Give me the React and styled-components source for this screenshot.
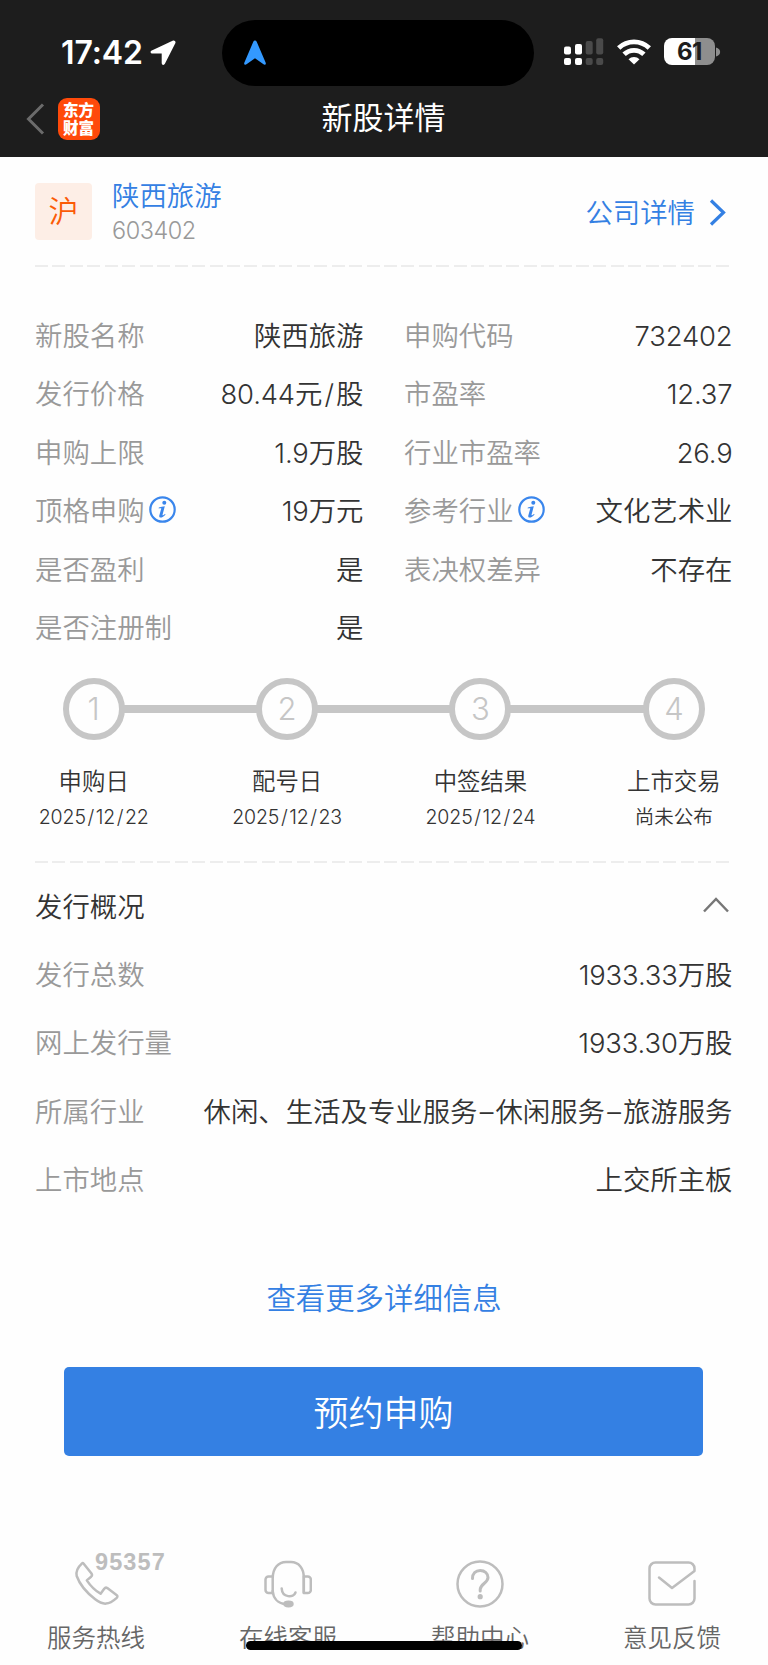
import React from 'react';
import styled, { createGlobalStyle } from 'styled-components';

const App = () => (
  <>
    <GlobalStyle />
    <Screen>
      <Header>
        <StatusBar>
          <Clock>
            <Time>17:42</Time>
            <LocationIcon />
          </Clock>
          <Island>
            <NavArrowIcon />
          </Island>
          <StatusIcons>
            <SignalIcon />
            <WifiIcon />
            <BatteryIcon />
          </StatusIcons>
        </StatusBar>
        <TitleBar>
          <BackGroup>
            <BackIcon />
            <BrandLogo>东方财富</BrandLogo>
          </BackGroup>
          <Title>新股详情</Title>
        </TitleBar>
      </Header>
      <Content>
        <StockHeader>
          <MarketTag>沪</MarketTag>
          <StockInfo>
            <StockName>陕西旅游</StockName>
            <StockCode>603402</StockCode>
          </StockInfo>
          <CompanyLink>
            公司详情
            <svg width="18" height="30" viewBox="0 0 18 30">
              <path d="M3 4.500 15.500 16.500 3 28.500" fill="none" stroke="#3480e3" strokeWidth="3.200" />
            </svg>
          </CompanyLink>
        </StockHeader>
        <Divider />
        <InfoGrid>
          {infoRows.map((item) => (
            <InfoCell key={item.label}>
              <Label>
                {item.label}
                {item.tip && <InfoIcon />}
              </Label>
              <Value text={item.value} />
            </InfoCell>
          ))}
        </InfoGrid>
        <Steps>
          {steps.map((step, i) => (
            <Step key={step.name}>
              <StepTrack>
                <StepLine $hidden={i === 0} />
                <StepCircle>{i + 1}</StepCircle>
                <StepLine $hidden={i === steps.length - 1} />
              </StepTrack>
              <StepName>{step.name}</StepName>
              <StepDate>
                <Mixed text={step.date} />
              </StepDate>
            </Step>
          ))}
        </Steps>
        <Divider />
        <SectionTitle>
          发行概况
          <svg width="28" height="18" viewBox="0 0 28 18">
            <path d="M2 15.500 14 3l12 12.500" fill="none" stroke="#777" strokeWidth="2.500" />
          </svg>
        </SectionTitle>
        {overview.map((item) => (
          <OverviewRow key={item.label}>
            <Label>{item.label}</Label>
            <Value text={item.value} />
          </OverviewRow>
        ))}
        <MoreLink>查看更多详细信息</MoreLink>
        <SubscribeButton>预约申购</SubscribeButton>
      </Content>
      <Footer>
        <FooterItem>
          <PhoneIcon />
          <HotlineNumber>95357</HotlineNumber>
          <span>服务热线</span>
        </FooterItem>
        <FooterItem>
          <HeadsetIcon />
          <span>在线客服</span>
        </FooterItem>
        <FooterItem>
          <HelpIcon />
          <span>帮助中心</span>
        </FooterItem>
        <FooterItem>
          <MailIcon />
          <span>意见反馈</span>
        </FooterItem>
      </Footer>
      <HomeIndicator />
    </Screen>
  </>
);

const infoRows = [
  { label: '新股名称', value: '陕西旅游' },
  { label: '申购代码', value: '732402' },
  { label: '发行价格', value: '80.44元/股' },
  { label: '市盈率', value: '12.37' },
  { label: '申购上限', value: '1.9万股' },
  { label: '行业市盈率', value: '26.9' },
  { label: '顶格申购', value: '19万元', tip: true },
  { label: '参考行业', value: '文化艺术业', tip: true },
  { label: '是否盈利', value: '是' },
  { label: '表决权差异', value: '不存在' },
  { label: '是否注册制', value: '是' },
];

const steps = [
  { name: '申购日', date: '2025/12/22' },
  { name: '配号日', date: '2025/12/23' },
  { name: '中签结果', date: '2025/12/24' },
  { name: '上市交易', date: '尚未公布' },
];

const overview = [
  { label: '发行总数', value: '1933.33万股' },
  { label: '网上发行量', value: '1933.30万股' },
  { label: '所属行业', value: '休闲、生活及专业服务–休闲服务–旅游服务' },
  { label: '上市地点', value: '上交所主板' },
];

// digits and separators use the latin face, everything else the CJK one
const Mixed = ({ text }) =>
  text
    .split(/([\d.]+|[/–])/)
    .filter(Boolean)
    .map((part, i) => {
      if (/^[/–]/.test(part)) return <Separator key={i}>{part}</Separator>;
      return /^\d/.test(part) ? <Num key={i}>{part}</Num> : part;
    });

const Value = ({ text }) => (
  <ValueText>
    <Mixed text={text} />
  </ValueText>
);

const LocationIcon = () => (
  <svg width="26" height="26" viewBox="0 0 26 26">
    <path
      d="M22.600 .8 1.800 10.400c-2 .9-1.500 3.200.6 3.200h9.300v9.400c0 2.200 2.400 2.500 3.200.8L25.300 3.300c.8-1.800-.9-3.300-2.700-2.500Z"
      fill="#fff"
    />
  </svg>
);

const NavArrowIcon = () => (
  <svg width="24" height="26" viewBox="0 0 24 26">
    <path
      d="M10.300 1.700c.6-1.500 2.800-1.500 3.400 0l9 21c.6 1.600-.9 2.500-2.200 1.600L12 18.200l-8.500 6.100c-1.300.9-2.800 0-2.200-1.600Z"
      fill="#3399ff"
    />
  </svg>
);

const SignalIcon = () => (
  <svg width="40" height="28" viewBox="0 0 40 28">
    <g fill="#fff">
      <rect x="0" y="8.500" width="7" height="8" rx="2" />
      <rect x="11" y="6" width="7" height="10.500" rx="2" />
      <rect x="0" y="20" width="7" height="7" rx="2" />
      <rect x="11" y="20" width="7" height="7" rx="2" />
    </g>
    <g fill="#4a4a4a">
      <rect x="21.700" y="3" width="7" height="13.500" rx="2" />
      <rect x="32.200" y="0.200" width="7" height="16.300" rx="2" />
      <rect x="21.700" y="20" width="7" height="7" rx="2" />
      <rect x="32.200" y="20" width="7" height="7" rx="2" />
    </g>
  </svg>
);

const WifiIcon = () => (
  <svg width="34" height="26" viewBox="0 0 34 26">
    <g fill="none" stroke="#fff" strokeWidth="4.800">
      <path d="M1.700 9a22 22 0 0 1 30.600 0" />
      <path d="M7.100 15.300a14.200 14.200 0 0 1 19.800 0" />
    </g>
    <path d="M17 25.500 11.500 20.200a7.900 7.900 0 0 1 11 0Z" fill="#fff" />
  </svg>
);

const BatteryIcon = () => (
  <Battery>
    <BatteryBody>61</BatteryBody>
    <svg width="5" height="10" viewBox="0 0 5 10">
      <path d="M0 0.500c5.500 1 5.500 8 0 9Z" fill="#8e8e8e" />
    </svg>
  </Battery>
);

const BackIcon = () => (
  <svg width="20" height="34" viewBox="0 0 20 34">
    <path d="M18 2.500 3.500 17 18 31.500" fill="none" stroke="#6b6b6b" strokeWidth="3" />
  </svg>
);

const InfoIcon = () => (
  <InfoSvg width="27" height="27" viewBox="0 0 27 27">
    <circle cx="13.500" cy="13.500" r="12.200" fill="none" stroke="#3a86ec" strokeWidth="2.200" />
    <circle cx="15.300" cy="6.800" r="2" fill="#3a86ec" />
    <path
      d="M9.800 11.600c2-.5 3.800-1 6-1.300l-2.200 8.200c-.3 1.300.6 1 2.400-.6l.6.500c-2.700 3.500-7 4.400-6.300 1.200l1.900-6.800c.2-.7-.4-.6-2.500-.4Z"
      fill="#3a86ec"
    />
  </InfoSvg>
);

const PhoneIcon = () => (
  <FooterSvg width="46" height="46" viewBox="0 0 46 46">
    <path d="M10.500 3.500 18.500 13.500c.8 1.100.6 2.200-.4 3.200l-4.300 3.700c4 6 8.300 10.300 13.800 13.300l3.600-5c1-1.200 1.900-1.400 3.100-.6L43.500 35c1.200.9 1.200 1.800.2 2.800-8 7.300-13.500 7.700-21.500 1.500C13.500 32.500 6.500 24 3.700 16 2.700 11.500 4 8 8.800 3.600c.7-.6 1.200-.7 1.700-.1Z" />
  </FooterSvg>
);

const HeadsetIcon = () => (
  <FooterSvg width="48" height="48" viewBox="0 0 48 48">
    <path d="M8.700 33V18.500C8.700 8 14.500 2 22 2h5c7.500 0 12.800 6 12.800 15.500v15" />
    <path d="M8.700 16.500H4.500a3 3 0 0 0-3 3V30a3 3 0 0 0 3 3h4.200M39.800 16.500h4a3 3 0 0 1 3 3V30a3 3 0 0 1-3 3h-4Z" />
    <path d="M8.700 31c.5 7.500 5.500 12.500 13.300 13.200" />
    <path d="M17.700 28.500c.5 9.500 12 9.500 13.800 4" />
    <ellipse cx="24.500" cy="44" rx="4" ry="2.200" fill="#bdbdbd" />
  </FooterSvg>
);

const HelpIcon = () => (
  <FooterSvg width="48" height="48" viewBox="0 0 48 48">
    <circle cx="24" cy="24" r="22.500" />
    <path
      d="M16.500 18.500c0-5 3.200-8 7.700-8 4.600 0 7.800 3 7.800 7 0 5.500-7.800 6.500-7.800 12v1.500"
      strokeWidth="3"
    />
    <circle cx="24.200" cy="36.700" r="2.600" fill="#bdbdbd" stroke="none" />
  </FooterSvg>
);

const MailIcon = () => (
  <FooterSvg width="48" height="48" viewBox="0 0 48 48">
    <path d="M46.500 21v17.500a6 6 0 0 1-6 6h-33a6 6 0 0 1-6-6v-30a6 6 0 0 1 6-6h33a6 6 0 0 1 6 6v2.500L24 28 11 17.500" />
  </FooterSvg>
);

const GlobalStyle = createGlobalStyle`
  body {
    margin: 0;
    background: #fefefe;
  }
`;

const Screen = styled.div`
  position: relative;
  box-sizing: border-box;
  width: 768px;
  height: 1665px;
  overflow: hidden;
  background: #fefefe;
  color: #333;
  font-family: 'Noto Sans CJK SC', sans-serif;
  font-weight: 350;
  font-size: 27.4px;
  svg {
    display: block;
    flex-shrink: 0;
  }
`;

const Header = styled.header`
  height: 157px;
  background: #1d1d1d;
  color: #fff;
`;

const StatusBar = styled.div`
  display: flex;
  align-items: center;
  height: 86px;
  padding: 0 47px 0 61px;
`;

const Clock = styled.div`
  display: flex;
  align-items: center;
  gap: 7px;
  width: 160.5px;
  padding-top: 19px;
`;

const Time = styled.span`
  font-family: Inter, sans-serif;
  font-size: 32px;
  font-weight: 600;
  line-height: 34px;
  letter-spacing: -0.1px;
`;

const Island = styled.div`
  display: flex;
  align-items: center;
  box-sizing: border-box;
  width: 312.5px;
  height: 66px;
  margin-top: 20px;
  padding-left: 21px;
  border-radius: 33px;
  background: #000;
`;

const StatusIcons = styled.div`
  display: flex;
  align-items: center;
  gap: 13px;
  margin-left: auto;
  padding-top: 17px;
`;

const Battery = styled.div`
  display: flex;
  align-items: center;
  gap: 1px;
`;

const BatteryBody = styled.div`
  width: 51px;
  height: 27px;
  border-radius: 8px;
  background: linear-gradient(to right, #fff 31px, #8e8e8e 31px);
  color: #1d1d1d;
  font-family: Inter, sans-serif;
  font-size: 24px;
  font-weight: 700;
  line-height: 28px;
  text-align: center;
  letter-spacing: -0.5px;
`;

const TitleBar = styled.div`
  display: grid;
  grid-template-columns: 1fr auto 1fr;
  align-items: center;
  height: 64px;
  padding: 0 26px 0 25px;
`;

const BackGroup = styled.div`
  display: flex;
  align-items: center;
  gap: 13px;
  padding-top: 1px;
`;

const BrandLogo = styled.div`
  box-sizing: border-box;
  width: 42px;
  height: 42px;
  padding: 2px 5px;
  border-radius: 9px;
  background: #ff4a0a;
  font-size: 15.5px;
  font-weight: 900;
  line-height: 18px;
  word-break: break-all;
`;

const Title = styled.h1`
  margin: 0 0 4px;
  font-size: 31px;
  font-weight: 400;
  line-height: 40px;
`;

const Content = styled.main`
  padding: 0 35px;
`;

const StockHeader = styled.div`
  display: flex;
  align-items: center;
  height: 108px;
`;

const MarketTag = styled.div`
  width: 57px;
  height: 57px;
  border-radius: 4px;
  background: #fdeee6;
  color: #fb5b06;
  font-size: 30px;
  line-height: 53px;
  text-align: center;
`;

const StockInfo = styled.div`
  display: flex;
  flex-direction: column;
  margin-left: 20px;
  padding-top: 2px;
`;

const StockName = styled.span`
  color: #3480e3;
  line-height: 38px;
`;

const StockCode = styled.span`
  color: #999;
  font-family: Inter, sans-serif;
  font-size: 23.5px;
  line-height: 36px;
  letter-spacing: -0.5px;
`;

const CompanyLink = styled.a`
  display: flex;
  align-items: center;
  gap: 13px;
  margin-left: auto;
  margin-right: 7px;
  color: #3480e3;
`;

const Divider = styled.div`
  width: 695px;
  height: 2px;
  background: repeating-linear-gradient(to right, #ededed 0 13px, transparent 13px 17.45px);
`;

const InfoGrid = styled.div`
  display: grid;
  grid-template-columns: 328.5px 328.5px;
  grid-auto-rows: 58.5px;
  column-gap: 40.5px;
  margin-top: 37.5px;
`;

const InfoCell = styled.div`
  display: flex;
  align-items: center;
  justify-content: space-between;
`;

const Label = styled.span`
  display: flex;
  align-items: center;
  color: #999;
  white-space: nowrap;
`;

const InfoSvg = styled.svg`
  margin: 1px 0 0 4px;
`;

const ValueText = styled.span`
  white-space: nowrap;
`;

const Num = styled.span`
  font-family: Inter, sans-serif;
  letter-spacing: -0.005em;
  line-height: 1;
`;

const Separator = styled(Num)`
  padding: 0 0.08em;
`;

const Steps = styled.div`
  display: flex;
  width: 774px;
  margin: 22px 0 27px -38px;
`;

const Step = styled.div`
  display: flex;
  flex-direction: column;
  align-items: center;
  width: 193.4px;
`;

const StepTrack = styled.div`
  display: flex;
  align-items: center;
  width: 100%;
`;

const StepLine = styled.div`
  flex: 1;
  height: 8px;
  background: ${(props) => (props.$hidden ? 'transparent' : '#c6c6c6')};
`;

const StepCircle = styled.div`
  box-sizing: border-box;
  width: 62px;
  height: 62px;
  margin: 0 -1px;
  border: 6px solid #c6c6c6;
  border-radius: 50%;
  color: #c6c6c6;
  font-family: Inter, sans-serif;
  font-size: 31px;
  font-weight: 300;
  line-height: 50px;
  text-align: center;
`;

const StepName = styled.div`
  margin-top: 22px;
  font-size: 23.4px;
  line-height: 36px;
`;

const StepDate = styled.div`
  font-size: 19.5px;
  line-height: 36px;
`;

const SectionTitle = styled.h2`
  display: flex;
  align-items: center;
  justify-content: space-between;
  height: 67.5px;
  margin: 9px 0 0;
  padding-right: 3px;
  font-size: 27.4px;
  font-weight: inherit;
`;

const OverviewRow = styled.div`
  display: flex;
  align-items: center;
  justify-content: space-between;
  width: 697.5px;
  height: 68.3px;
`;

const MoreLink = styled.a`
  display: block;
  margin-top: 64px;
  color: #3480e3;
  font-size: 29.4px;
  line-height: 40px;
  text-align: center;
`;

const SubscribeButton = styled.button`
  display: block;
  width: 639px;
  height: 89px;
  margin: 51px 0 0 29px;
  padding: 0 0 3px;
  border: 0;
  border-radius: 5px;
  background: #3480e3;
  color: #fff;
  font-family: inherit;
  font-size: 35px;
  font-weight: inherit;
`;

const Footer = styled.footer`
  display: grid;
  grid-template-columns: repeat(4, 1fr);
  margin-top: 104px;
`;

const FooterItem = styled.div`
  position: relative;
  display: flex;
  flex-direction: column;
  align-items: center;
  justify-content: space-between;
  height: 95px;
  color: #666;
  font-size: 24.5px;
  line-height: 36px;
`;

const FooterSvg = styled.svg`
  fill: none;
  stroke: #bdbdbd;
  stroke-width: 2.5;
  stroke-linejoin: round;
  stroke-linecap: round;
`;

const HotlineNumber = styled.span`
  position: absolute;
  top: -8px;
  left: 95px;
  color: #bdbdbd;
  font-family: 'Liberation Sans', sans-serif;
  font-size: 23.5px;
  font-weight: 700;
  line-height: 20px;
  letter-spacing: 1.1px;
`;

const HomeIndicator = styled.div`
  position: absolute;
  left: 246px;
  top: 1641px;
  width: 276px;
  height: 9px;
  border-radius: 5px;
  background: #000;
`;

export default App;
